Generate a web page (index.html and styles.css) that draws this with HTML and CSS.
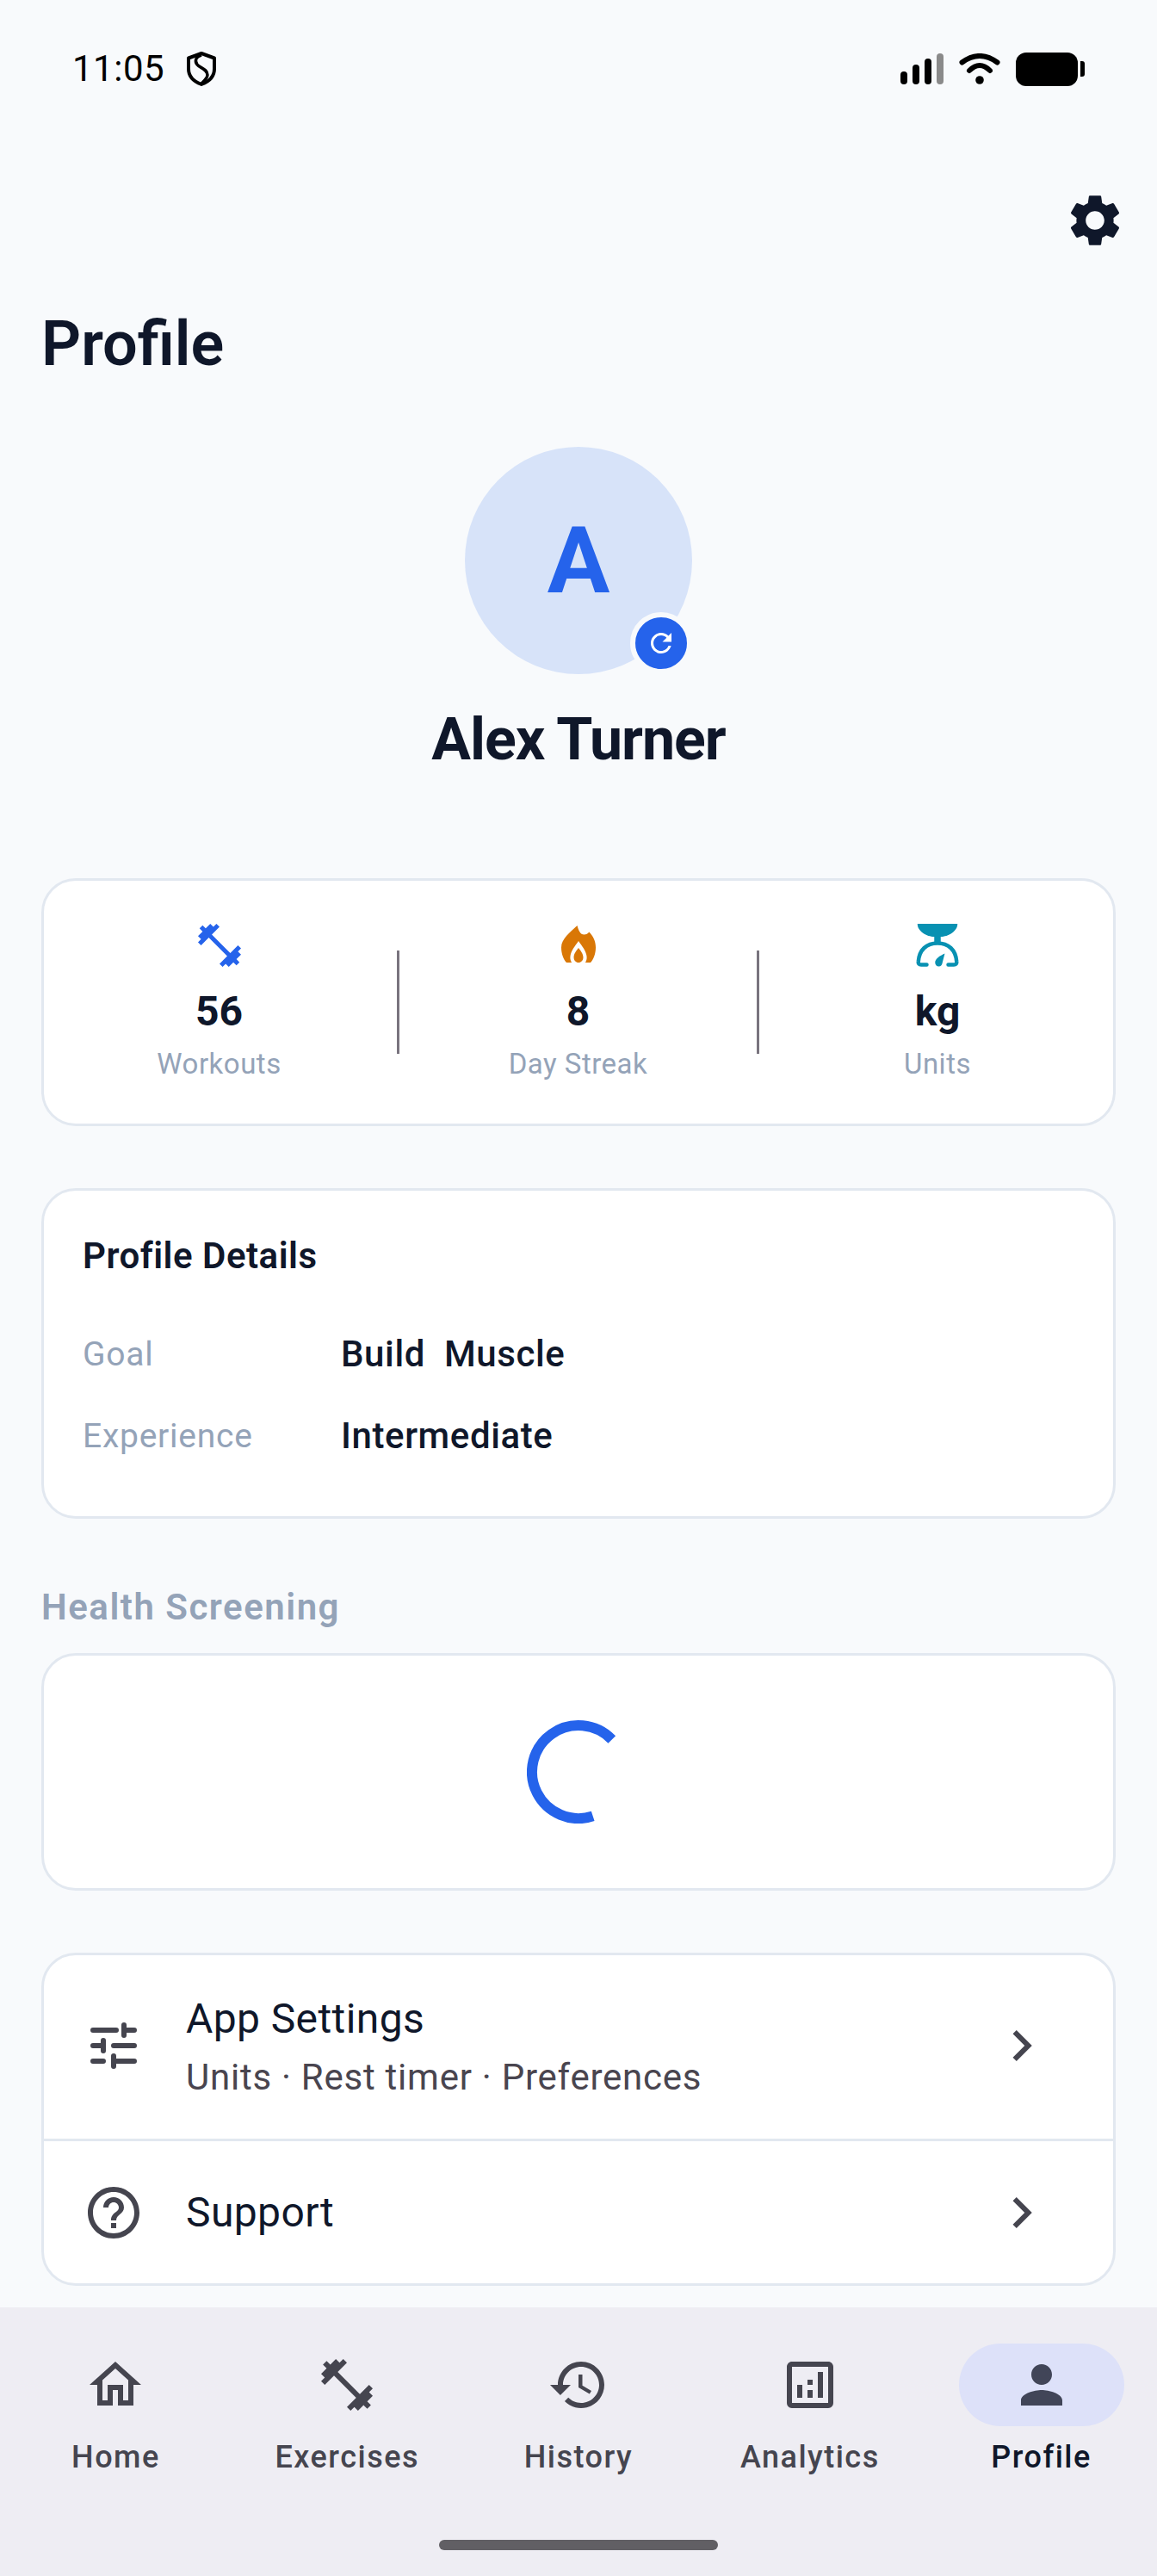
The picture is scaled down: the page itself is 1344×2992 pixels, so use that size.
FILE: index.html
```html
<!DOCTYPE html>
<html lang="en">
<head>
<meta charset="utf-8">
<title>Profile</title>
<link rel="stylesheet" href="styles.css">
</head>
<body>
<div class="screen">
  <div class="status">
    <div class="status-left">
      <span class="time">11:05</span>
      <svg class="shield" viewBox="0 0 34 40" fill="none" stroke="#000" stroke-width="4" stroke-linejoin="round"><path d="M17 2 32 7.5V20C32 29 25 35 17 38 9 35 2 29 2 20V7.5Z"/><path stroke-width="3.5" d="M17 4C10 6 9 11 12 15 15 19 24 20 24 27 24 31 20 34 17 37"/></svg>
    </div>
    <div class="status-right">
      <div class="signal">
        <span class="sig s1"></span><span class="sig s2"></span><span class="sig s3"></span><span class="sig s4"></span>
      </div>
      <svg class="wifi" viewBox="0 0 48 36" fill="none" stroke="#000" stroke-width="6" stroke-linecap="round"><path d="M3.5 10.5Q24-4.5 44.500 10.5"/><path d="M12 20Q24 8 36 20"/><circle cx="24" cy="31" r="4.800" fill="#000" stroke="none"/></svg>
      <div class="battery"><span class="bat-body"></span><span class="bat-nub"></span></div>
    </div>
  </div>

  <div class="topbar">
    <svg class="gear" viewBox="0 0 24 24"><path d="M19.14 12.94c.04-.3.06-.61.06-.94 0-.32-.02-.64-.07-.94l2.03-1.58c.18-.14.23-.41.12-.61l-1.92-3.32c-.12-.22-.37-.29-.59-.22l-2.39.96c-.5-.38-1.03-.7-1.62-.94l-.36-2.54c-.04-.24-.24-.41-.48-.41h-3.84c-.24 0-.43.17-.47.41l-.36 2.54c-.59.24-1.13.57-1.62.94l-2.39-.96c-.22-.08-.47 0-.59.22L2.74 8.87c-.12.21-.08.47.12.61l2.03 1.58c-.05.3-.09.63-.09.94s.02.64.07.94l-2.03 1.58c-.18.14-.23.41-.12.61l1.92 3.32c.12.22.37.29.59.22l2.39-.96c.5.38 1.03.7 1.62.94l.36 2.54c.05.24.24.41.48.41h3.84c.24 0 .44-.17.47-.41l.36-2.54c.59-.24 1.13-.56 1.62-.94l2.39.96c.22.08.47 0 .59-.22l1.92-3.32c.12-.22.07-.47-.12-.61l-2.01-1.58zM12 15.6c-1.98 0-3.6-1.62-3.6-3.6s1.62-3.6 3.6-3.6 3.6 1.62 3.6 3.6-1.62 3.6-3.6 3.6z"/></svg>
  </div>

  <h1 class="title">Profile</h1>

  <div class="identity">
    <div class="avatar">
      <span class="avatar-letter">A</span>
      <span class="avatar-badge">
        <svg class="refresh" viewBox="0 0 24 24"><path d="M17.65 6.35C16.2 4.9 14.21 4 12 4c-4.42 0-7.99 3.58-7.99 8s3.57 8 7.99 8c3.730 0 6.840-2.550 7.730-6h-2.080c-.82 2.330-3.040 4-5.650 4-3.310 0-6-2.690-6-6s2.690-6 6-6c1.660 0 3.140.69 4.220 1.780L13 11h7V4l-2.350 2.350z"/></svg>
      </span>
    </div>
    <div class="name">Alex Turner</div>
  </div>

  <section class="card stats">
    <div class="stat stat-first">
      <svg class="stat-icon icon-blue" viewBox="0 0 24 24"><path d="M20.57 14.86L22 13.43 20.57 12 17 15.57 8.43 7 12 3.43 10.57 2 9.14 3.43 7.71 2 5.57 4.14 4.14 2.71 2.71 4.14l1.43 1.43L2 7.71l1.43 1.43L2 10.57 3.43 12 7 8.43 15.57 17 12 20.57 13.43 22l1.43-1.43L16.29 22l2.14-2.14 1.43 1.43 1.43-1.43-1.430-1.430L22 16.29z"/></svg>
      <div class="stat-value">56</div>
      <div class="stat-label">Workouts</div>
    </div>
    <span class="stat-divider"></span>
    <div class="stat">
      <svg class="stat-icon" viewBox="0 0 24 24"><path fill="#D97706" d="M11.400 2.800C12 5 12.800 7 14.600 7 15.600 7 16.400 6.600 16.900 5.800 18.800 7.600 20 10 20 13 20 16 19 18.400 17.600 20H6.400C5 18.400 4 16 4 13 4 9 8 6 11.400 2.800Z"/><path fill="#fff" d="M12 10C10.400 12.300 8.500 14.500 8.200 17 8 18.400 8.400 19.400 9 20.200H15C15.600 19.400 16 18.400 15.800 17 15.500 14.500 13.600 12.300 12 10Z"/><path fill="#D97706" d="M12 13.200C11 14.600 9.800 15.800 9.800 17.600 9.800 19 10.800 20 12 20 13.200 20 14.200 19 14.200 17.600 14.200 15.800 13 14.600 12 13.200Z"/></svg>
      <div class="stat-value">8</div>
      <div class="stat-label">Day Streak</div>
    </div>
    <span class="stat-divider"></span>
    <div class="stat stat-last">
      <svg class="stat-icon" viewBox="0 0 24 24"><path fill="#0891B2" d="M2.700 2H21.300C21.300 5.500 17 8 13.500 8V11.200H10.500V8C7 8 2.700 5.500 2.700 2Z"/><path fill="none" stroke="#0891B2" stroke-width="1.800" stroke-linecap="round" d="M7 21H4.400C3.400 21 3 20.400 3.100 19.600 3.500 14 7 11 12 11 17 11 20.500 14 20.900 19.600 21 20.400 20.600 21 19.600 21H17"/><path fill="#0891B2" d="M15.400 15.800C13 16.800 10.900 18.400 10.900 20 10.900 21 11.600 21.800 12.600 21.800 13.600 21.800 14.200 21 14.300 20Z"/></svg>
      <div class="stat-value">kg</div>
      <div class="stat-label">Units</div>
    </div>
  </section>

  <section class="card details">
    <h2 class="details-title">Profile Details</h2>
    <div class="detail-row"><span class="detail-key">Goal</span><span class="detail-val">Build  Muscle</span></div>
    <div class="detail-row"><span class="detail-key">Experience</span><span class="detail-val">Intermediate</span></div>
  </section>

  <h2 class="section-label">Health Screening</h2>
  <section class="card screening">
    <svg class="spinner" viewBox="0 0 120 120" fill="none"><path stroke="#2563EB" stroke-width="12" d="M98.800 22.500A54 54 0 1 0 76.700 111.400"/></svg>
  </section>

  <section class="card menu">
    <div class="menu-row menu-row-tall">
      <svg class="menu-icon" viewBox="0 0 24 24" fill="none" stroke="#45454F" stroke-width="2" stroke-linecap="round"><path d="M4 6H13M16 4V8M16 6H20M4 12H8M8 10V14M12 12H20M4 18H8M12 16V20M12 18H20"/></svg>
      <div class="menu-text menu-text-nudge">
        <div class="menu-title">App Settings</div>
        <div class="menu-sub">Units · Rest timer · Preferences</div>
      </div>
      <svg class="chevron" viewBox="0 0 24 24"><path d="M10.590 6 9.180 7.410 13.760 12 9.180 16.590 10.590 18l6-6z"/></svg>
    </div>
    <div class="menu-row menu-row-short">
      <svg class="menu-icon icon-grey" viewBox="0 0 24 24"><path d="M11 18h2v-2h-2v2zm1-16C6.480 2 2 6.480 2 12s4.480 10 10 10 10-4.480 10-10S17.520 2 12 2zm0 18c-4.410 0-8-3.590-8-8s3.590-8 8-8 8 3.590 8 8-3.590 8-8 8zm0-14c-2.210 0-4 1.790-4 4h2c0-1.100.9-2 2-2s2 .9 2 2c0 2-3 1.750-3 5h2c0-2.250 3-2.500 3-5 0-2.210-1.790-4-4-4z"/></svg>
      <div class="menu-text"><div class="menu-title">Support</div></div>
      <svg class="chevron" viewBox="0 0 24 24"><path d="M10.590 6 9.180 7.410 13.760 12 9.180 16.590 10.590 18l6-6z"/></svg>
    </div>
  </section>

  <nav class="nav">
    <div class="nav-items">
      <div class="nav-item">
        <span class="nav-pill"><svg class="nav-icon" viewBox="0 0 24 24"><path d="M12 5.690l5 4.500V18h-2v-6H9v6H7v-7.810l5-4.500M12 3L2 12h3v8h6v-6h2v6h6v-8h3L12 3z"/></svg></span>
        <span class="nav-label">Home</span>
      </div>
      <div class="nav-item">
        <span class="nav-pill"><svg class="nav-icon" viewBox="0 0 24 24"><path d="M20.570 14.860L22 13.430 20.570 12 17 15.570 8.430 7 12 3.430 10.570 2 9.140 3.430 7.710 2 5.570 4.140 4.140 2.710 2.710 4.140l1.430 1.430L2 7.710l1.430 1.430L2 10.570 3.430 12 7 8.430 15.570 17 12 20.570 13.430 22l1.430-1.430L16.290 22l2.140-2.140 1.430 1.430 1.430-1.430-1.430-1.430L22 16.290z"/></svg></span>
        <span class="nav-label">Exercises</span>
      </div>
      <div class="nav-item">
        <span class="nav-pill"><svg class="nav-icon" viewBox="0 0 24 24"><path d="M13 3c-4.970 0-9 4.030-9 9H1l3.890 3.890.07.14L9 12H6c0-3.870 3.130-7 7-7s7 3.130 7 7-3.130 7-7 7c-1.930 0-3.680-.79-4.940-2.060l-1.420 1.420C8.270 19.990 10.510 21 13 21c4.970 0 9-4.030 9-9s-4.030-9-9-9zm-1 5v5l4.280 2.540.72-1.210-3.500-2.080V8H12z"/></svg></span>
        <span class="nav-label">History</span>
      </div>
      <div class="nav-item">
        <span class="nav-pill"><svg class="nav-icon" viewBox="0 0 24 24"><path d="M19 3H5c-1.100 0-2 .9-2 2v14c0 1.100.9 2 2 2h14c1.100 0 2-.9 2-2V5c0-1.100-.9-2-2-2zm0 16H5V5h14v14zM7 12h2v5H7v-5zm8-5h2v10h-2V7zm-4 7h2v3h-2v-3zm0-4h2v2h-2v-2z"/></svg></span>
        <span class="nav-label">Analytics</span>
      </div>
      <div class="nav-item nav-item-active">
        <span class="nav-pill"><svg class="nav-icon" viewBox="0 0 24 24"><path d="M12 12c2.210 0 4-1.790 4-4s-1.790-4-4-4-4 1.790-4 4 1.790 4 4 4zm0 2c-2.670 0-8 1.340-8 4v2h16v-2c0-2.660-5.330-4-8-4z"/></svg></span>
        <span class="nav-label">Profile</span>
      </div>
    </div>
    <span class="gesture"></span>
  </nav>
</div>
</body>
</html>
```
FILE: styles.css
```css
* { box-sizing: border-box; }
html, body { margin: 0; padding: 0; }
body { font-family: Roboto, "Noto Sans", sans-serif; color: #0F172A; background: #F8FAFC; }

.screen { width: 1344px; height: 2992px; display: flex; flex-direction: column; background: #F8FAFC; overflow: hidden; }

/* status bar */
.status { height: 156px; padding: 4px 84px 0; display: flex; justify-content: space-between; align-items: center; }
.status-left { display: flex; align-items: center; gap: 26px; }
.time { font-size: 42px; line-height: 50px; color: #000; letter-spacing: 0.5px; }
.shield { width: 34px; height: 40px; display: block; }
.status-right { display: flex; align-items: center; }
.signal { display: flex; align-items: flex-end; gap: 6px; height: 36px; margin-right: 18px; }
.sig { width: 8px; border-radius: 4px; background: #000; display: block; }
.s1 { height: 15px; }
.s2 { height: 23px; }
.s3 { height: 30px; }
.s4 { height: 36px; background: #8A8A8A; }
.wifi { width: 48px; height: 36px; display: block; margin-right: 18px; }
.battery { display: flex; align-items: center; gap: 3px; }
.bat-body { width: 72px; height: 39px; border-radius: 12px; background: #000; display: block; }
.bat-nub { width: 5px; height: 18px; border-radius: 0 3px 3px 0; background: #000; display: block; }

/* header */
.topbar { height: 202px; padding: 64px 36px 0 0; display: flex; justify-content: flex-end; align-items: flex-start; }
.gear { width: 72px; height: 72px; fill: #0F172A; display: block; }
.title { margin: 0; padding-left: 48px; font-size: 72px; line-height: 84px; font-weight: 600; color: #0F172A; }

/* identity */
.identity { margin-top: 77px; display: flex; flex-direction: column; align-items: center; }
.avatar { position: relative; width: 264px; height: 264px; border-radius: 50%; background: #D7E3F9; display: flex; align-items: center; justify-content: center; }
.avatar-letter { font-size: 108px; line-height: 126px; font-weight: 700; color: #2563EB; }
.avatar-badge { position: absolute; right: 0; bottom: 0; width: 72px; height: 72px; border-radius: 50%; border: 6px solid #F8FAFC; background: #2563EB; display: flex; align-items: center; justify-content: center; }
.refresh { width: 36px; height: 36px; fill: #fff; display: block; }
.name { margin-top: 36px; font-size: 68px; line-height: 80px; font-weight: 700; color: #0F172A; letter-spacing: -1px; }

/* cards */
.card { margin: 0 48px; background: #fff; border: 3px solid #E2E8F0; border-radius: 40px; }

.stats { margin-top: 121px; height: 288px; display: grid; grid-template-columns: 410px 3px 1fr 3px 411px; align-items: center; }
.stat { padding-top: 45px; height: 100%; display: flex; flex-direction: column; align-items: center; }
.stat-first { margin-left: -3px; }
.stat-last { margin-right: -3px; }
.stat-icon { width: 60px; height: 60px; display: block; }
.icon-blue { fill: #2563EB; }
.stat-value { margin-top: 19px; font-size: 48px; line-height: 56px; font-weight: 700; color: #0F172A; }
.stat-label { margin-top: 13px; font-size: 33px; line-height: 39px; color: #94A3B8; letter-spacing: 0.5px; }
.stat-divider { width: 3px; height: 120px; background: #79747E; display: block; }

.details { margin-top: 72px; height: 384px; padding: 51px 45px 0; }
.details-title { margin: 0 0 41px; font-size: 42px; line-height: 50px; font-weight: 600; color: #0F172A; letter-spacing: 0.5px; }
.detail-row { display: flex; align-items: center; height: 95px; }
.detail-key { width: 300px; font-size: 39px; line-height: 50px; color: #94A3B8; letter-spacing: 0.75px; }
.detail-val { font-size: 42px; line-height: 50px; font-weight: 500; color: #0F172A; white-space: pre; letter-spacing: 0.6px; }

.section-label { margin: 78px 48px 0; font-size: 42px; line-height: 50px; font-weight: 600; color: #94A3B8; letter-spacing: 1.5px; }
.screening { margin-top: 28px; height: 276px; display: flex; align-items: center; justify-content: center; }
.spinner { width: 120px; height: 120px; display: block; }

.menu { margin-top: 72px; height: 387px; display: flex; flex-direction: column; }
.menu-row { display: flex; align-items: center; padding: 0 72px 0 45px; }
.menu-row-tall { height: 210px; padding-bottom: 3px; border-bottom: 3px solid #E2E8F0; box-sizing: content-box; }
.menu-row-short { flex: 1; }
.menu-icon { width: 72px; height: 72px; display: block; flex: none; }
.icon-grey { fill: #45454F; }
.menu-text { flex: 1; margin-left: 48px; }
.menu-text-nudge { padding-top: 3px; }
.menu-title { font-size: 48px; line-height: 56px; color: #0F172A; letter-spacing: 0.4px; }
.menu-sub { margin-top: 15px; font-size: 42px; line-height: 50px; color: #49454F; letter-spacing: 0.75px; }
.chevron { width: 72px; height: 72px; fill: #45454F; display: block; flex: none; }

/* bottom nav */
.nav { margin-top: 25px; flex: 1; background: #EEEDF3; display: flex; flex-direction: column; align-items: center; position: relative; }
.nav-items { width: 100%; display: grid; grid-template-columns: repeat(5, 1fr); padding-top: 42px; }
.nav-item { display: flex; flex-direction: column; align-items: center; }
.nav-pill { width: 192px; height: 96px; border-radius: 48px; display: flex; align-items: center; justify-content: center; }
.nav-icon { width: 72px; height: 72px; fill: #45454F; display: block; }
.nav-label { margin-top: 15px; font-size: 36px; line-height: 42px; font-weight: 500; color: #45454F; letter-spacing: 1.5px; }
.nav-item-active .nav-pill { background: #DDE1F9; }
.nav-item-active .nav-icon { fill: #414558; }
.nav-item-active .nav-label { color: #0F172A; }
.gesture { position: absolute; left: 510px; bottom: 30px; width: 324px; height: 12px; border-radius: 6px; background: #615F64; }
```
